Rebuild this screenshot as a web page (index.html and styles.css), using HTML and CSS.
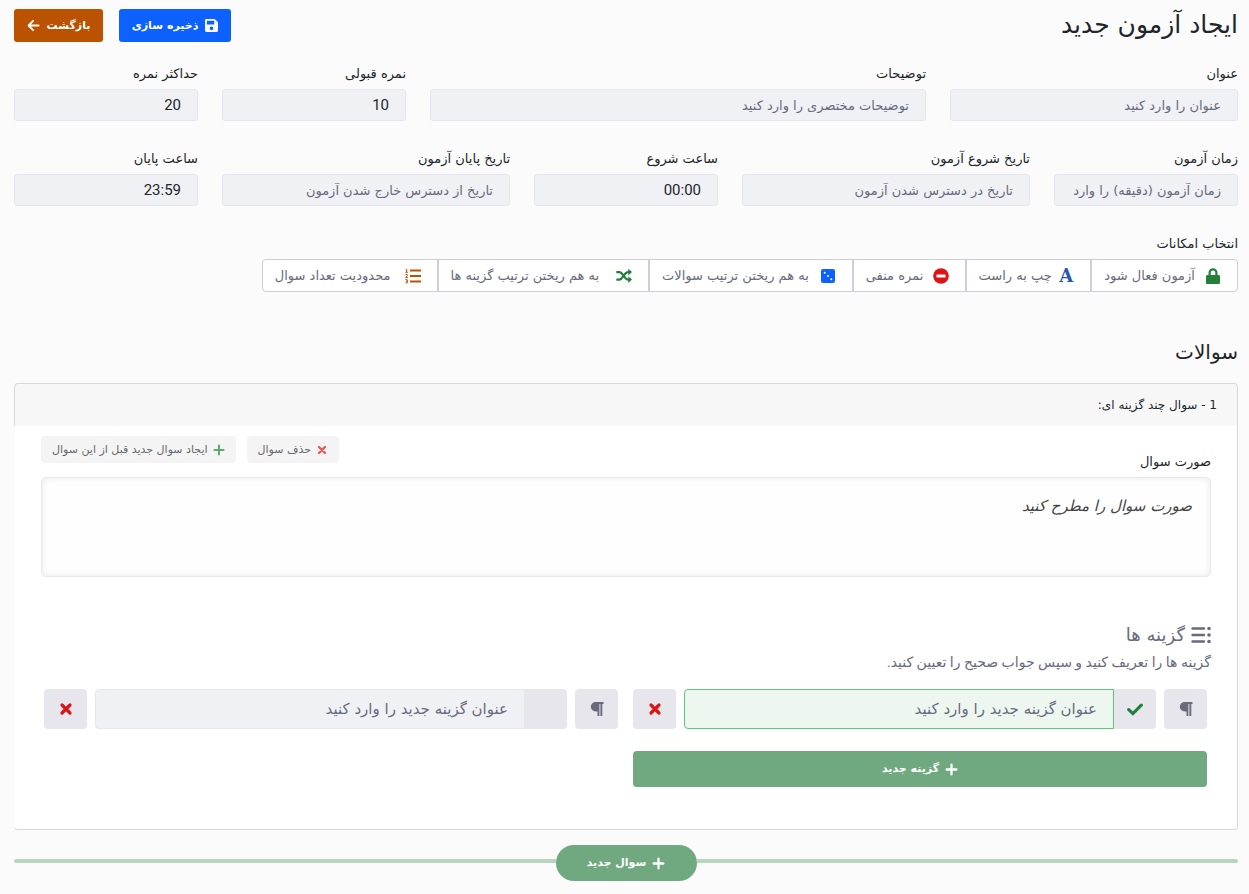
FILE: index.html
```html
<!DOCTYPE html>
<html lang="fa" dir="rtl">
<head>
<meta charset="utf-8">
<meta name="viewport" content="width=device-width, initial-scale=1">
<title>ایجاد آزمون جدید</title>
<link rel="stylesheet" href="styles.css">
</head>
<body>
<svg class="sprite" aria-hidden="true">
  <symbol id="plus" viewBox="0 0 16 16"><path d="M8 2v12M2 8h12" fill="none" stroke="currentColor" stroke-width="2.800" stroke-linecap="round"/></symbol>
  <symbol id="times" viewBox="0 0 16 16"><path d="M4 4l8 8M12 4l-8 8" fill="none" stroke="currentColor" stroke-width="3.200" stroke-linecap="round"/></symbol>
  <symbol id="para" viewBox="0 0 16 16"><path d="M6.500 1H14.500v2h-1.200v12h-1.900V3h-1v12H8.500v-4.600h-2A4.700 4.700 0 0 1 6.500 1z" fill="currentColor"/></symbol>
</svg>
<main class="page">
  <form>
    <header class="topbar">
      <h1 class="title">ایجاد آزمون جدید</h1>
      <div class="topbar-actions">
        <button type="button" class="btn btn-save">
          <svg class="icon-sm" viewBox="0 32 448 448"><path fill="currentColor" d="M433.941 129.941l-83.882-83.882A48 48 0 0 0 316.118 32H48C21.490 32 0 53.490 0 80v352c0 26.510 21.490 48 48 48h352c26.510 0 48-21.490 48-48V163.882a48 48 0 0 0-14.059-33.941zM224 416c-35.346 0-64-28.654-64-64s28.654-64 64-64 64 28.654 64 64-28.654 64-64 64zm96-304.520V212c0 6.627-5.373 12-12 12H76c-6.627 0-12-5.373-12-12V108c0-6.627 5.373-12 12-12h228.520c3.183 0 6.235 1.264 8.485 3.515l3.480 3.480A11.996 11.996 0 0 1 320 111.480z"/></svg>
          ذخیره سازی
        </button>
        <button type="button" class="btn btn-back">
          بازگشت
          <svg class="icon-sm" viewBox="0 0 14 14"><path d="M12.500 7H2M6.500 2L1.700 7l4.800 5" fill="none" stroke="currentColor" stroke-width="2" stroke-linecap="round" stroke-linejoin="round"/></svg>
        </button>
      </div>
    </header>

    <div class="grid">
      <div class="field span-3"><label for="f-title">عنوان</label><input id="f-title" type="text" placeholder="عنوان را وارد کنید"></div>
      <div class="field span-5"><label for="f-desc">توضیحات</label><input id="f-desc" type="text" placeholder="توضیحات مختصری را وارد کنید"></div>
      <div class="field span-2"><label for="f-pass">نمره قبولی</label><input id="f-pass" class="numeric" type="text" value="10"></div>
      <div class="field span-2"><label for="f-max">حداکثر نمره</label><input id="f-max" class="numeric" type="text" value="20"></div>
      <div class="field span-2"><label for="f-dur">زمان آزمون</label><input id="f-dur" type="text" placeholder="زمان آزمون (دقیقه) را وارد کنید"></div>
      <div class="field span-3"><label for="f-sd">تاریخ شروع آزمون</label><input id="f-sd" type="text" placeholder="تاریخ در دسترس شدن آزمون"></div>
      <div class="field span-2"><label for="f-st">ساعت شروع</label><input id="f-st" class="numeric" type="text" value="00:00"></div>
      <div class="field span-3"><label for="f-ed">تاریخ پایان آزمون</label><input id="f-ed" type="text" placeholder="تاریخ از دسترس خارج شدن آزمون"></div>
      <div class="field span-2"><label for="f-et">ساعت پایان</label><input id="f-et" class="numeric" type="text" value="23:59"></div>
    </div>

    <section class="features">
      <p class="features-label" id="features-label">انتخاب امکانات</p>
      <div class="feature-group" role="group" aria-labelledby="features-label">
        <button type="button" class="feature">
          <svg class="icon c-green" viewBox="0 0 16 16"><path fill="currentColor" fill-rule="evenodd" d="M3.500 7V4.700a4.500 4.500 0 0 1 9 0V7h.9c.9 0 1.600.7 1.600 1.500v5.900c0 .9-.7 1.600-1.600 1.600H2.600C1.700 16 1 15.300 1 14.400V8.500C1 7.700 1.700 7 2.600 7zM5.700 7h4.600V4.800a2.300 2.300 0 0 0-4.600 0z"/></svg>
          آزمون فعال شود
        </button>
        <button type="button" class="feature">
          <span class="letter-icon c-navy" aria-hidden="true">A</span>
          چپ به راست
        </button>
        <button type="button" class="feature">
          <svg class="icon c-red" viewBox="0 0 16 16"><circle cx="8" cy="8" r="7.800" fill="currentColor"/><rect x="3.500" y="6.500" width="9" height="3" rx=".6" fill="#fff"/></svg>
          نمره منفی
        </button>
        <button type="button" class="feature">
          <svg class="icon c-blue" viewBox="0 0 16 16"><rect x="1" y="1" width="14" height="14" rx="2" fill="currentColor"/><g fill="#fff"><circle cx="4.700" cy="4.700" r="1"/><circle cx="8" cy="8" r="1"/><circle cx="11.300" cy="11.300" r="1"/></g></svg>
          به هم ریختن ترتیب سوالات
        </button>
        <button type="button" class="feature">
          <svg class="icon c-green" viewBox="0 0 16 16"><path d="M.3 4.100h2.900c1 0 1.500.4 2.100 1l4.400 5.300c.6.700 1.200 1.200 2.100 1.200h1.500M.3 11.600h2.900c1 0 1.500-.4 2.100-1l4.400-5.300c.6-.7 1.200-1.200 2.100-1.200h1.500" fill="none" stroke="currentColor" stroke-width="2.200"/><path fill="currentColor" d="M12.300 .8l3.700 3.300-3.700 3.300zM12.300 8.300l3.700 3.300-3.700 3.300z"/></svg>
          به هم ریختن ترتیب گزینه ها
        </button>
        <button type="button" class="feature">
          <svg class="icon c-orange" viewBox="0 0 16 16"><path d="M5 2.500h11M5 8h11M5 13.500h11" stroke="currentColor" stroke-width="2"/><path d="M.7 1.200h1v3M.3 4.300h2.600M.5 6.500h1.800v1.300L.6 9.500h2.200M.4 11.700h1.900v3.100H.4M1 13.200h1.300" fill="none" stroke="currentColor" stroke-width="1"/></svg>
          محدودیت تعداد سوال
        </button>
      </div>
    </section>

    <h2 class="section-title">سوالات</h2>

    <article class="card">
      <div class="card-head">1 - سوال چند گزینه ای:</div>
      <div class="card-body">
        <div class="question-bar">
          <label class="question-label" for="q-text">صورت سوال</label>
          <div class="question-actions">
            <button type="button" class="chip"><svg class="icon-xs c-red" viewBox="0 0 16 16"><use href="#times"/></svg>حذف سوال</button>
            <button type="button" class="chip"><svg class="icon-xs c-green" viewBox="0 0 16 16"><use href="#plus"/></svg>ایجاد سوال جدید قبل از این سوال</button>
          </div>
        </div>
        <textarea class="question-text" id="q-text" placeholder="صورت سوال را مطرح کنید"></textarea>

        <h3 class="options-title">
          <svg class="icon-lg" viewBox="0 0 20 20"><path d="M1.500 3.500h11.500M1.500 10h11.500M1.500 16.500h11.500" stroke="currentColor" stroke-width="2.400" stroke-linecap="round"/><g fill="currentColor"><circle cx="18" cy="3.500" r="1.800"/><circle cx="18" cy="10" r="1.800"/><circle cx="18" cy="16.500" r="1.800"/></g></svg>
          گزینه ها
        </h3>
        <p class="options-hint">گزینه ها را تعریف کنید و سپس جواب صحیح را تعیین کنید.</p>

        <div class="options">
          <div class="option is-correct">
            <button type="button" class="square" aria-label="ویرایشگر متن"><svg class="icon" viewBox="0 0 16 16"><use href="#para"/></svg></button>
            <div class="option-input">
              <label class="mark"><input type="radio" name="answer" aria-label="جواب صحیح" checked><svg class="icon c-green" viewBox="0 0 16 16"><path d="M1.700 8.600l4.200 4L14.300 4.200" fill="none" stroke="currentColor" stroke-width="3.200" stroke-linecap="round"/></svg></label>
              <input class="option-text" type="text" aria-label="گزینه ۱" placeholder="عنوان گزینه جدید را وارد کنید">
            </div>
            <button type="button" class="square" aria-label="حذف گزینه"><svg class="icon c-red" viewBox="0 0 16 16"><use href="#times"/></svg></button>
          </div>
          <div class="option">
            <button type="button" class="square" aria-label="ویرایشگر متن"><svg class="icon" viewBox="0 0 16 16"><use href="#para"/></svg></button>
            <div class="option-input">
              <label class="mark"><input type="radio" name="answer" aria-label="جواب صحیح"></label>
              <input class="option-text" type="text" aria-label="گزینه ۲" placeholder="عنوان گزینه جدید را وارد کنید">
            </div>
            <button type="button" class="square" aria-label="حذف گزینه"><svg class="icon c-red" viewBox="0 0 16 16"><use href="#times"/></svg></button>
          </div>
          <button type="button" class="add-btn"><svg class="icon-sm" viewBox="0 0 16 16"><use href="#plus"/></svg>گزینه جدید</button>
        </div>
      </div>
    </article>

    <div class="add-question">
      <button type="button" class="add-btn pill"><svg class="icon-sm" viewBox="0 0 16 16"><use href="#plus"/></svg>سوال جدید</button>
    </div>
  </form>
</main>
</body>
</html>
```
FILE: styles.css
```css
* { box-sizing: border-box; }

:root {
  --text: #212529;
  --muted: #696a7c;
  --line: #d8d8d8;
  --field: #f0f1f5;
  --field-line: #e6e6ec;
  --square: #e7e6ed;
  --green: #23803c;
  --soft-green: #70a97f;
  --latin-first: Roboto, "DejaVu Sans", sans-serif;
}

body {
  margin: 0;
  background: #fbfbfb;
  color: var(--text);
  font-family: "DejaVu Sans", Roboto, sans-serif;
  font-size: 13px;
  line-height: 20px;
}

button, input, textarea { font: inherit; color: inherit; margin: 0; }
button { cursor: pointer; border: 0; padding: 0; white-space: nowrap; }
h1, h2, h3, p { margin: 0; font-weight: 400; }
svg { display: block; flex: none; }

.sprite { position: absolute; width: 0; height: 0; }
.icon { width: 16px; height: 16px; }
.icon-sm { width: 13px; height: 13px; }
.icon-xs { width: 12px; height: 12px; }
.icon-lg { width: 20px; height: 20px; }
.letter-icon {
  width: 16px; text-align: center;
  font-family: "DejaVu Serif", serif; font-size: 18px; font-weight: 700;
}
.c-green { color: var(--green); }
.c-red { color: #dc1414; }
.c-blue { color: #0d61ff; }
.c-navy { color: #2a56b0; }
.c-orange { color: #bc5200; }

.page { padding: 9px 11px 13px 14px; }

.topbar { display: flex; justify-content: space-between; align-items: flex-start; }
.title { font-size: 25px; line-height: 32px; }
.topbar-actions { display: flex; gap: 16px; }
.btn {
  display: flex; align-items: center; justify-content: center; gap: 7px;
  height: 33px; border-radius: 3px; color: #fff; font-size: 11px; font-weight: 700;
}
.btn-save { width: 112px; background: #0d61ff; }
.btn-back { width: 89px; background: #bb5200; }

.grid {
  display: grid; grid-template-columns: repeat(12, minmax(0, 1fr));
  gap: 28px 24px; margin-top: 22px;
}
.span-2 { grid-column: span 2; }
.span-3 { grid-column: span 3; }
.span-5 { grid-column: span 5; }
.field { display: flex; flex-direction: column; gap: 5px; }
.field input {
  width: 100%; height: 32px; padding: 0 16px;
  border: 1px solid var(--field-line); border-radius: 3px; background: var(--field);
}
.field .numeric { font-family: var(--latin-first); font-size: 15px; }
::placeholder { color: var(--muted); opacity: 1; }

.features { margin-top: 28px; }
.feature-group {
  display: grid; grid-template-columns: 145fr 126fr 113fr 204fr 212fr 176fr;
  width: calc(80% - 3px); margin-top: 5px;
  border: 1px solid #cfcddd; border-radius: 4px; background: #fff;
}
.feature {
  display: flex; align-items: center; justify-content: space-between;
  height: 31px; padding: 0 16px 0 12px; background: none; color: var(--muted);
}
.feature + .feature { border-right: 2px solid #cfcddd; }

.section-title { margin-top: 44px; font-size: 20px; line-height: 32px; }

.card {
  margin-top: 15px; border: 1px solid var(--line); border-left: 0;
  border-radius: 4px; background: #fff;
}
.card-head {
  padding: 11px 20px; border-left: 1px solid var(--line);
  border-radius: 4px 4px 0 0; background: #f7f7f7; font-size: 12px;
}
.card-body { padding: 10px 26px 42px 27px; }

.question-bar { display: flex; justify-content: space-between; align-items: flex-end; height: 41px; }
.question-label { padding-bottom: 5px; }
.question-actions { display: flex; gap: 11px; align-self: flex-start; }
.chip {
  display: flex; align-items: center; gap: 5px; height: 27px; padding: 0 11px;
  border-radius: 4px; background: #f0f0f0; font-size: 11px; opacity: .7;
}
.question-text {
  display: block; width: 100%; height: 100px; padding: 18px; resize: none;
  border: 1px solid #e9e9e9; border-radius: 5px; background: #fefefe;
  box-shadow: inset 0 0 6px #e8e8e8; font-size: 15px; font-style: italic;
}
.question-text::placeholder { color: #444; }

.options-title {
  display: flex; align-items: center; gap: 6px; margin-top: 46px;
  color: var(--muted); font-size: 18px; line-height: 24px;
}
.options-hint { margin-top: 5px; color: var(--muted); font-family: var(--latin-first); font-size: 14px; }

.options {
  display: grid; grid-template-columns: 1fr 1fr; gap: 22px 15px;
  margin-top: 17px; padding: 0 4px 0 3px;
}
.option { display: flex; gap: 8px; min-width: 0; }
.square {
  display: flex; align-items: center; justify-content: center; flex: none;
  width: 43px; height: 40px; border-radius: 4px; background: var(--square); color: var(--muted);
}
.option-input { display: flex; flex: 1; min-width: 0; }
.mark {
  display: flex; align-items: center; justify-content: center; flex: none;
  width: 42px; border-radius: 0 4px 4px 0; background: var(--square);
}
.mark input { appearance: none; width: 0; height: 0; }
.option-text {
  flex: 1; min-width: 0; height: 40px; padding: 0 16px;
  border: 1px solid var(--field-line); border-radius: 4px 0 0 4px;
  background: var(--field); font-size: 15px;
}
.is-correct .option-text { border-color: #5dc779; background: #edf7f0; }

.add-btn {
  display: flex; align-items: center; justify-content: center; gap: 6px;
  height: 36px; border-radius: 4px; background: var(--soft-green);
  color: #fff; font-size: 11px; font-weight: 700;
}

.add-question { display: flex; align-items: center; margin-top: 15px; }
.add-question::before, .add-question::after {
  content: ""; flex: 1; height: 4px; margin-bottom: 4px; background: #b9d4c0;
}
.add-question::before { border-radius: 0 2px 2px 0; }
.add-question::after { border-radius: 2px 0 0 2px; }
.pill { width: 141px; border-radius: 18px; }
```
